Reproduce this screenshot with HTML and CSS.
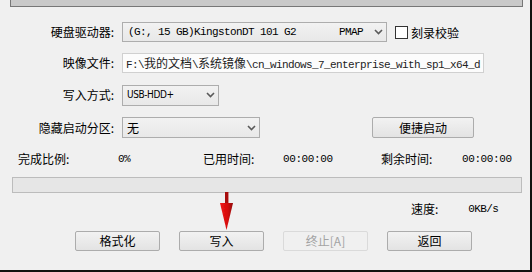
FILE: index.html
```html
<!DOCTYPE html>
<html lang="zh-CN">
  <head>
    <meta charset="UTF-8" />
    <title>写入硬盘映像</title>
    <link rel="stylesheet" href="styles.css">
  </head>
  <body>
    <div class="window">
      <div class="topbox"></div>

      <div class="form">
        <div class="row row-drive">
          <span class="label">硬盘驱动器:</span>
          <div class="combo combo-drive">
            <span class="mono">(G:, 15 GB)KingstonDT 101 G2</span>
            <span class="mono pmap">PMAP</span>
            <svg class="chev" width="9" height="6" viewBox="0 0 9 6"><polyline points="1,1 4.5,4.5 8,1" fill="none" stroke="#5a5a5a" stroke-width="1.6"/></svg>
          </div>
          <span class="check"><span class="box"></span>刻录校验</span>
        </div>

        <div class="row row-file">
          <span class="label">映像文件:</span>
          <div class="field mono">F:\<span class="cjk">我的文档</span>\<span class="cjk">系统镜像</span>\cn_windows_7_enterprise_with_sp1_x64_d</div>
        </div>

        <div class="row row-mode">
          <span class="label">写入方式:</span>
          <div class="combo combo-mode">
            <span class="narrow">USB-HDD+</span>
            <svg class="chev" width="9" height="6" viewBox="0 0 9 6"><polyline points="1,1 4.5,4.5 8,1" fill="none" stroke="#5a5a5a" stroke-width="1.6"/></svg>
          </div>
        </div>

        <div class="row row-hide">
          <span class="label">隐藏启动分区:</span>
          <div class="combo combo-hide">
            <span>无</span>
            <svg class="chev" width="9" height="6" viewBox="0 0 9 6"><polyline points="1,1 4.5,4.5 8,1" fill="none" stroke="#5a5a5a" stroke-width="1.6"/></svg>
          </div>
          <button class="btn btn-quick">便捷启动</button>
        </div>
      </div>

      <div class="stats">
        <span>完成比例:</span>
        <span class="mono">0%</span>
        <span>已用时间:</span>
        <span class="mono time">00:00:00</span>
        <span>剩余时间:</span>
        <span class="mono time">00:00:00</span>
      </div>

      <div class="progress"></div>

      <div class="speed">
        <span>速度:</span>
        <span class="mono">0KB/s</span>
      </div>

      <div class="actions">
        <button class="btn">格式化</button>
        <button class="btn">写入</button>
        <button class="btn" disabled>终止[A]</button>
        <button class="btn">返回</button>
      </div>

      <svg class="arrow" width="20" height="44" viewBox="0 0 20 44">
        <defs>
          <linearGradient id="head" x1="0" x2="1" y1="0" y2="0">
            <stop offset="0" stop-color="#f01818"/>
            <stop offset="0.6" stop-color="#d40c0c"/>
            <stop offset="1" stop-color="#8e0606"/>
          </linearGradient>
          <filter id="soft"><feGaussianBlur stdDeviation="0.5"/></filter>
        </defs>
        <rect x="7" y="2" width="3.4" height="13" fill="#a81010" filter="url(#soft)"/>
        <polygon points="2,13 15,13 8.5,40" fill="url(#head)" filter="url(#soft)"/>
      </svg>
    </div>
  </body>
</html>
```

FILE: styles.css
```css
* {
  box-sizing: border-box;
}
body {
  margin: 0;
  background: #f0f0f0;
}
.window {
  position: relative;
  width: 532px;
  height: 272px;
  background: #f0f0f0;
  border-right: 2px solid #111;
  border-bottom: 2px solid #111;
  font-family: "Noto Sans CJK SC", sans-serif;
  font-size: 12px;
  color: #000;
}
.topbox {
  margin-left: 10px;
  width: 513px;
  height: 7px;
  border: 1px solid #777;
  border-top: none;
  background: #c9c9c9;
}
.mono {
  font-family: "Liberation Mono", "Noto Sans CJK SC", monospace;
  font-size: 11px;
  letter-spacing: -0.6px;
}
.mono .cjk {
  font-family: "Noto Sans CJK SC", sans-serif;
  font-size: 12px;
  letter-spacing: 0;
}
.narrow {
  font-family: "Liberation Sans Narrow", "DejaVu Sans Condensed", "Liberation Sans", sans-serif;
  font-size: 10px;
  letter-spacing: -0.4px;
}

/* form rows */
.form {
  margin-top: 15px;
}
.row {
  display: flex;
  align-items: center;
  height: 20px;
  margin-bottom: 12px;
}
.row-drive {
  margin-bottom: 11px;
}
.label {
  width: 114px;
  text-align: right;
  line-height: 20px;
  margin-right: 8px;
  white-space: nowrap;
}
.combo {
  display: flex;
  align-items: center;
  height: 20px;
  padding: 0 3px 0 5px;
  border: 1px solid #adadad;
  background: linear-gradient(#f2f2f2, #e8e8e8);
  line-height: 18px;
  white-space: nowrap;
}
.combo .chev {
  margin-left: auto;
  flex: none;
}
.combo-drive {
  width: 265px;
}
.pmap {
  margin-left: 43px;
}
.combo-mode {
  width: 97px;
  height: 21px;
  padding-left: 4px;
}
.combo-hide {
  width: 138px;
  height: 21px;
  padding-left: 4px;
}
.row-hide {
  height: 21px;
}
.check {
  display: flex;
  align-items: center;
  margin-left: 8px;
  gap: 3px;
}
.check .box {
  width: 13px;
  height: 13px;
  border: 1px solid #333;
  background: #fff;
}
.field {
  width: 362px;
  height: 20px;
  padding-left: 3px;
  border: 1px solid #d0d0d0;
  background: #fcfcfc;
  line-height: 18px;
  color: #222;
  white-space: nowrap;
  overflow: hidden;
}

/* buttons */
.btn {
  height: 20px;
  padding: 0;
  border: 1px solid #acacac;
  border-radius: 2px;
  background: linear-gradient(#f2f2f2, #e3e3e3);
  font-family: "Noto Sans CJK SC", sans-serif;
  font-size: 12px;
  line-height: 18px;
  color: #000;
}
.btn:disabled {
  border-color: #dadada;
  background: #f0f0f0;
  color: #a3a3a3;
}
.btn-quick {
  width: 102px;
  height: 21px;
  margin-left: 112px;
}

/* status */
.stats {
  display: grid;
  grid-template-columns: 100px 85px 80px 98px 81px auto;
  padding-left: 18px;
  margin-top: 13px;
  line-height: 16px;
}
.stats .time {
  letter-spacing: -0.4px;
}
.progress {
  margin: 10px 0 0 12px;
  width: 510px;
  height: 16px;
  border: 1px solid #bcbcbc;
  background: #e6e6e6;
}
.speed {
  display: flex;
  margin: 8px 0 0 411px;
  line-height: 16px;
}
.speed .mono {
  margin-left: 30px;
}
.actions {
  display: flex;
  gap: 19px;
  margin: 14px 0 0 75px;
}
.actions .btn {
  width: 85px;
}

.arrow {
  position: absolute;
  left: 218px;
  top: 190px;
}
```
